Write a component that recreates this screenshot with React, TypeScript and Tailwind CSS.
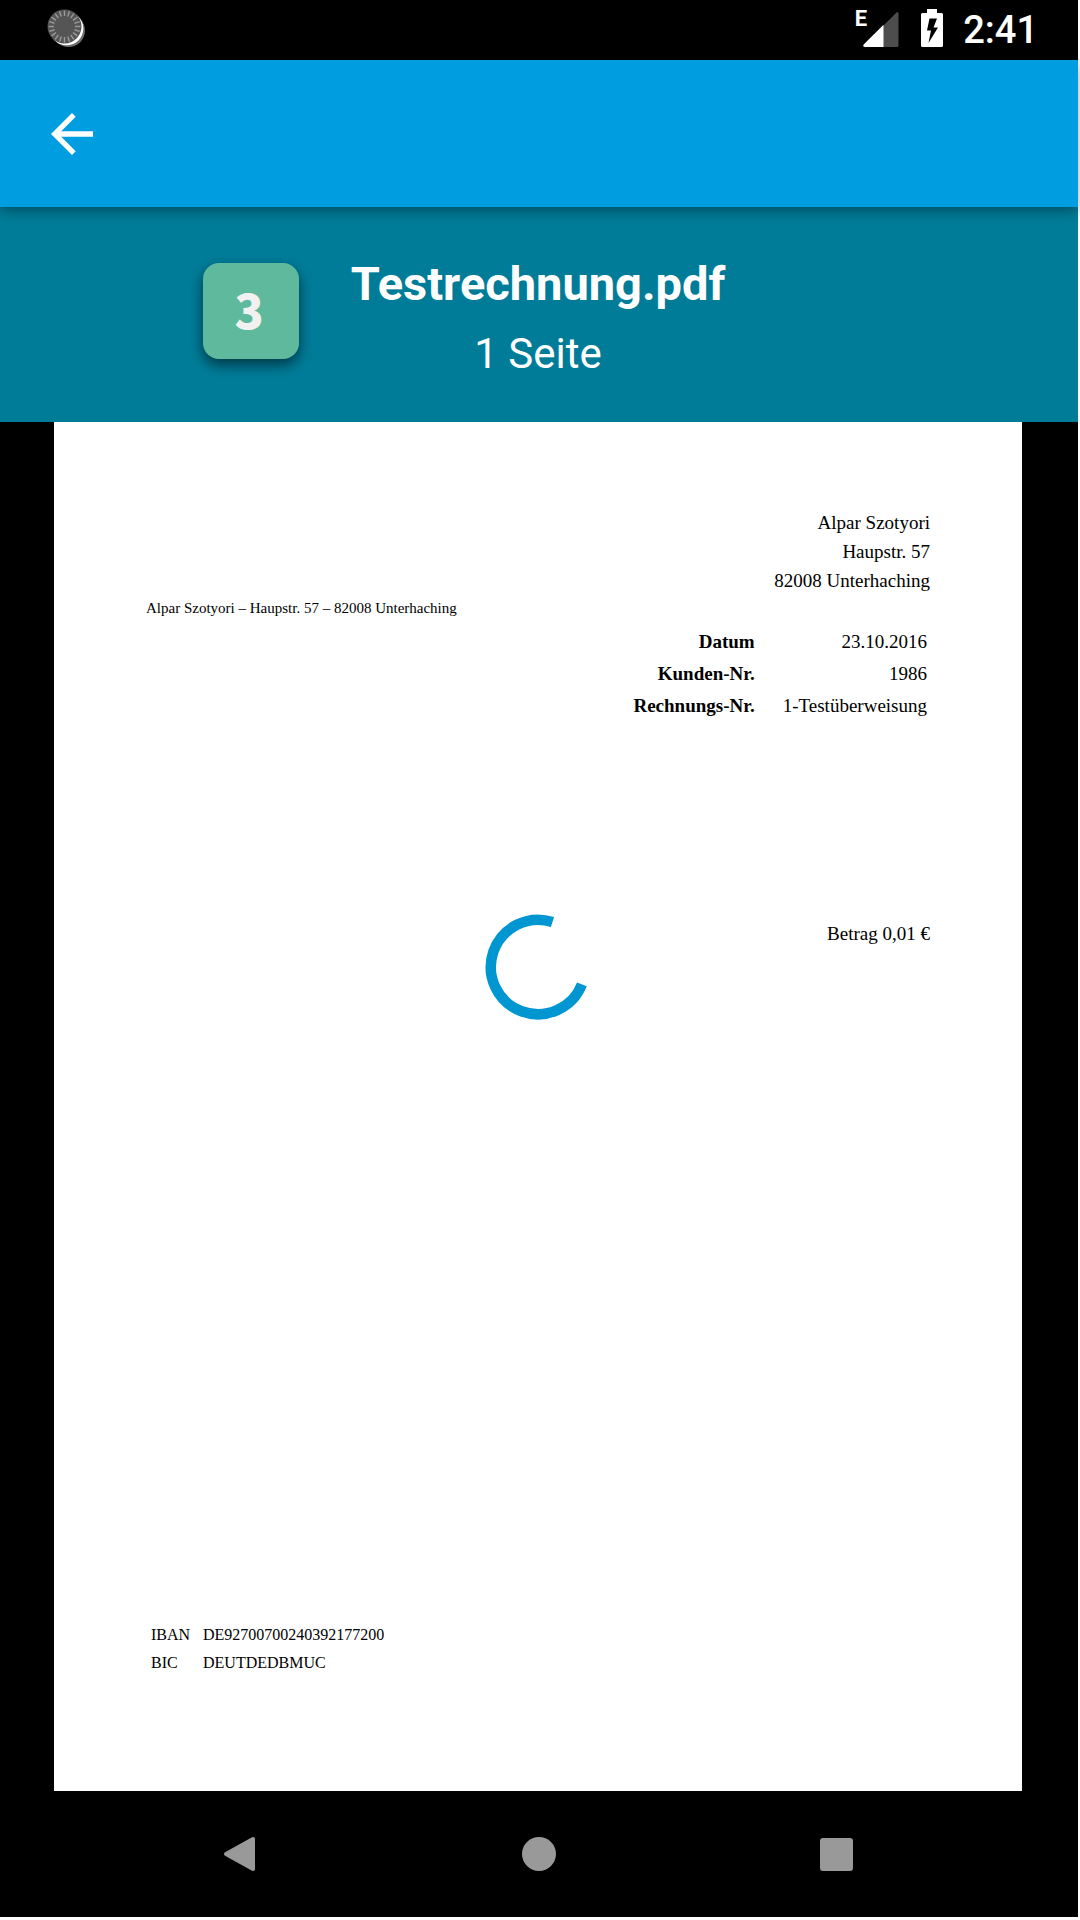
const TICKS = Array.from({ length: 20 }, (_, i) => i * 18);

function SyncIcon() {
  return (
    <svg viewBox="0 0 40 40" className="mb-1 size-10" aria-hidden="true">
      <circle cx="22.5" cy="22.5" r="16.5" fill="#6f6f6f" />
      <circle cx="20.5" cy="20.5" r="16.8" fill="#fff" />
      <circle cx="18.5" cy="18.5" r="17" fill="#555" />
      {TICKS.map((a) => (
        <path key={a} d="M18.5 2.500v5.500" stroke="#999" strokeWidth="1.4" transform={`rotate(${a} 18.5 18.5)`} />
      ))}
    </svg>
  );
}

function StatusBar() {
  return (
    <header className="flex h-[60px] items-center justify-between bg-black pr-10 pl-[46px] text-white">
      <SyncIcon />
      <div className="flex items-center">
        <span className="self-start pt-[3px] text-[22px] leading-4 font-bold">E</span>
        <svg viewBox="0 0 36 36" className="-ml-1 size-9" aria-hidden="true">
          <path d="M1 35 L0 34 L33.500 .5 Q35.500 -.5 35.500 1.500 V33.500 Q35.500 35 34 35 H1Z" fill="#4d4d4d" />
          <path d="M1.500 35 Q-.5 34 .7 32.500 L20.500 12.800 V35Z" fill="#fff" />
        </svg>
        <svg viewBox="0 0 22 38" className="mb-1 ml-[22px] h-[38px] w-[22px]" aria-hidden="true">
          <path fillRule="evenodd" d="M6 0H16V4H20.500Q22 4 22 5.500V36.500Q22 38 20.500 38H1.500Q0 38 0 36.500V5.500Q0 4 1.500 4H6ZM8.500 9.500L6 21.500H10L7.500 34L17 18.500H12.500L16 9.500Z" fill="#fff" />
        </svg>
        <time className="ml-5 text-[38px] leading-[44px] font-medium">2:41</time>
      </div>
    </header>
  );
}

function AppBar() {
  return (
    <nav className="relative z-10 flex h-[147px] items-center bg-[#009ee0] pl-[51px] shadow-[0_4px_12px_rgba(0,0,0,0.35)]">
      <button type="button" aria-label="Zurück" className="text-white">
        <svg viewBox="0 0 42 42" className="size-[42px]" aria-hidden="true">
          <path d="M42 18.200H10.200L24.700 3.700L21 0L0 21L21 42L24.700 38.300L10.200 23.800H42Z" fill="currentColor" />
        </svg>
      </button>
    </nav>
  );
}

function FileHeader() {
  return (
    <section className="relative flex h-[215px] flex-col items-center bg-[#007c99] pt-[49px] pr-[2px] text-white">
      <div className="absolute top-14 left-[203px] flex size-24 items-center justify-center rounded-2xl bg-[#5fba9d] pr-1 pb-[6px] font-['Noto_Sans_CJK_SC',sans-serif] text-[48px] leading-[48px] font-black text-[#f1f1f1] shadow-[0_6px_14px_rgba(0,0,0,0.55)]">
        3
      </div>
      <h1 className="text-[47px] leading-[56px] font-bold">Testrechnung.pdf</h1>
      <p className="mt-[17px] text-[42px] leading-[50px]">1 Seite</p>
    </section>
  );
}

function Spinner() {
  return (
    <div role="progressbar" aria-label="Wird geladen" className="absolute inset-x-0 top-[492px] flex justify-center pr-[2px]">
      <svg viewBox="-53 -53 106 106" className="size-[106px]">
        <path d="M14.500 -44.900A47.200 47.200 0 1 0 43.900 17.400" fill="none" stroke="#0096d2" strokeWidth="10.500" />
      </svg>
    </div>
  );
}

const DETAILS = [
  ["Datum", "23.10.2016"],
  ["Kunden-Nr.", "1986"],
  ["Rechnungs-Nr.", "1-Testüberweisung"],
];

const BANK = [
  ["IBAN", "DE92700700240392177200"],
  ["BIC", "DEUTDEDBMUC"],
];

function Invoice() {
  return (
    <article className="mr-14 ml-[54px] flex grow flex-col bg-white pt-[86px] pr-[92px] pb-[114px] pl-[92px] font-['Liberation_Serif',serif] text-[19px] leading-[29px] text-black">
      <address className="text-right not-italic">
        Alpar Szotyori
        <br />
        Haupstr. 57
        <br />
        82008 Unterhaching
      </address>
      <p className="text-[15px] leading-[26px]">Alpar Szotyori – Haupstr. 57 – 82008 Unterhaching</p>
      <table className="mt-1 mr-[3px] self-end text-right">
        <tbody>
          {DETAILS.map(([label, value]) => (
            <tr key={label} className="h-8">
              <th scope="row" className="p-0 pr-7 text-right font-bold">{label}</th>
              <td className="p-0">{value}</td>
            </tr>
          ))}
        </tbody>
      </table>
      <p className="mt-[198px] text-right">Betrag 0,01 €</p>
      <table className="mt-auto ml-[5px] self-start text-[16px] leading-7">
        <tbody>
          {BANK.map(([label, value]) => (
            <tr key={label}>
              <th scope="row" className="w-[52px] p-0 text-left font-normal">{label}</th>
              <td className="p-0">{value}</td>
            </tr>
          ))}
        </tbody>
      </table>
    </article>
  );
}

function SystemNav() {
  return (
    <footer className="flex h-[126px] items-center justify-between bg-black pr-[225px] pl-[221px] text-[#999]">
      <button type="button" aria-label="Zurück">
        <svg viewBox="0 0 36 36" className="size-9" aria-hidden="true">
          <path d="M5 18L32 3V33Z" fill="currentColor" stroke="currentColor" strokeWidth="4" strokeLinejoin="round" />
        </svg>
      </button>
      <button type="button" aria-label="Startbildschirm" className="size-[34px] rounded-full bg-[#999]" />
      <button type="button" aria-label="Letzte Apps" className="size-[33px] rounded-[3px] bg-[#999]" />
    </footer>
  );
}

export default function App() {
  return (
    <div className="flex min-h-screen flex-col bg-white pr-[2px] pb-[3px] font-[Roboto,sans-serif]">
      <StatusBar />
      <AppBar />
      <FileHeader />
      <main className="relative flex grow flex-col bg-black">
        <Invoice />
        <Spinner />
      </main>
      <SystemNav />
    </div>
  );
}
